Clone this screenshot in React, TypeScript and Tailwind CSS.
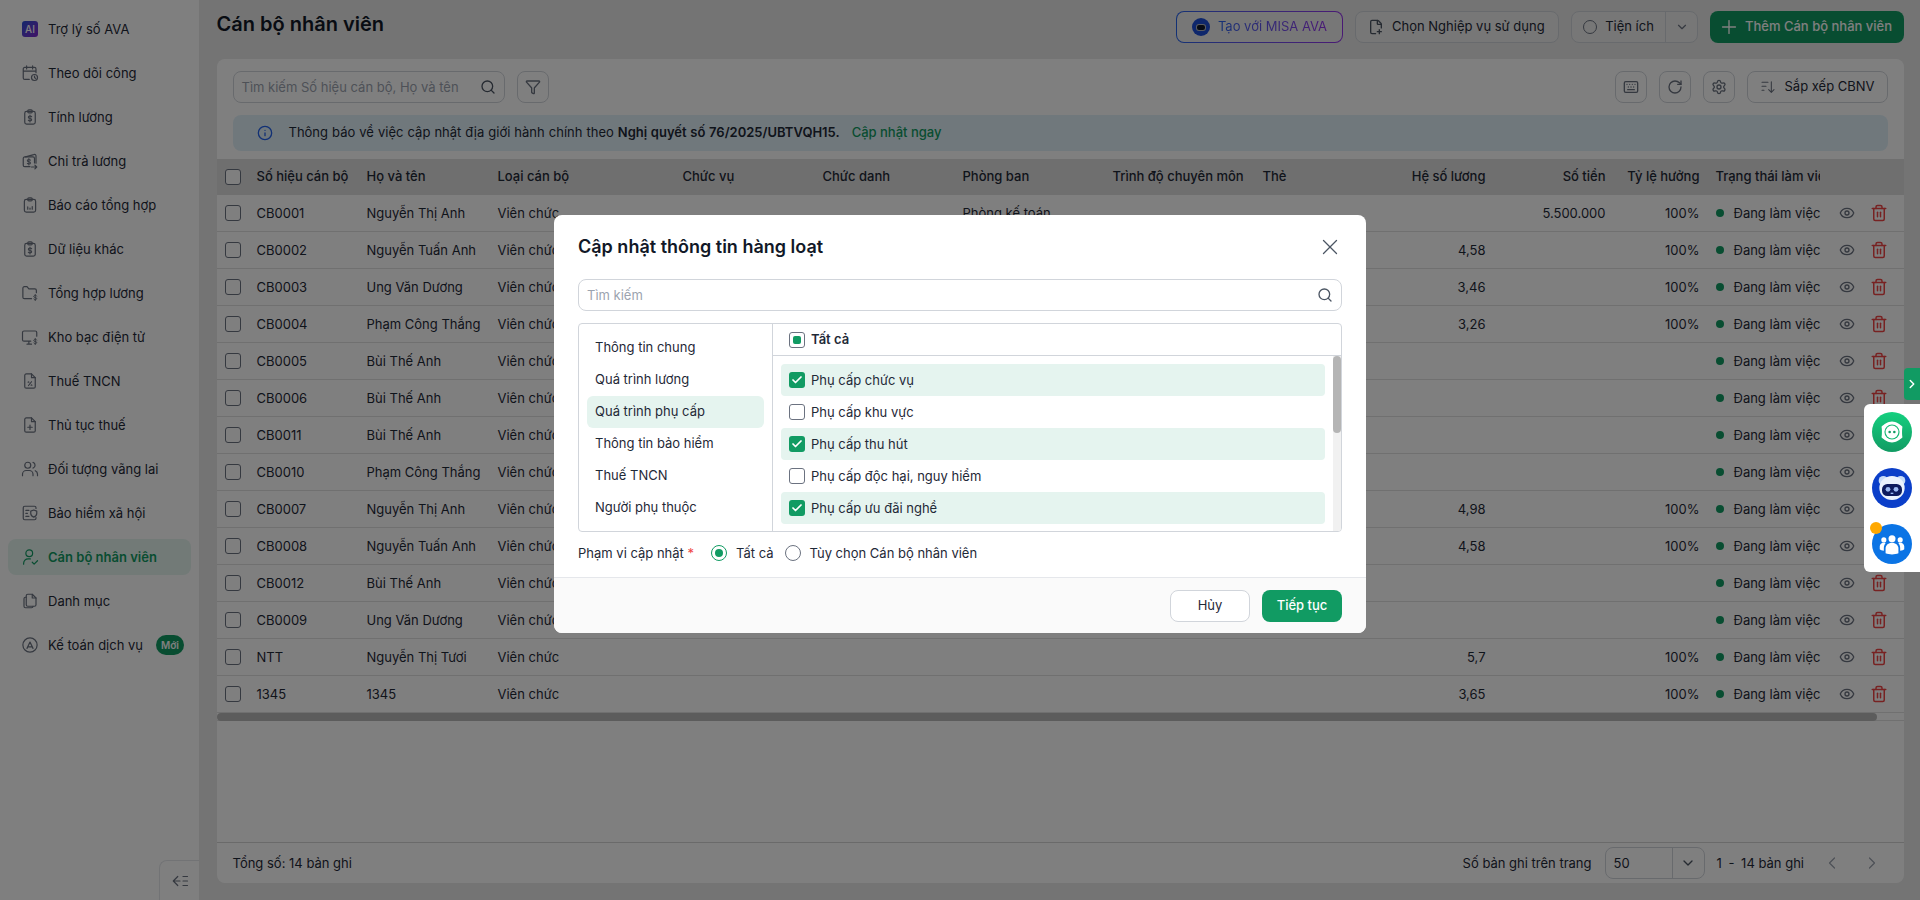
import React from 'react';
import {
  Check, ChevronDown, ChevronLeft, ChevronRight, Eye, FilePlus2, Filter, Info, Keyboard,
  Plus, RotateCw, Search, Settings, Trash2, X,
} from 'lucide-react';

type IconProps = { children: React.ReactNode; className?: string };

// base for hand drawn menu icons, 24 grid
const Ico = ({ children, className = 'w-[18px] h-[18px]' }: IconProps) => (
  <svg viewBox="0 0 24 24" fill="none" stroke="currentColor" strokeWidth={1.6} strokeLinecap="round" strokeLinejoin="round" className={className}>
    {children}
  </svg>
);

const Dollar = ({ x, y, s = 1 }: { x: number; y: number; s?: number }) => (
  <g transform={`translate(${x} ${y}) scale(${s})`}>
    <path d="M2.5-2.5C2-3.4 1-3.6 0-3.6c-1.3 0-2.5.6-2.5 1.8S-1.2 0 0 0s2.5.6 2.5 1.8S1.3 3.6 0 3.6c-1 0-2-.2-2.5-1.1M0-5v10" />
  </g>
);

const ClipDollar = () => (
  <Ico>
    <rect x="5" y="4.5" width="14" height="17" rx="2.5" />
    <rect x="9" y="2.5" width="6" height="4" rx="1.5" />
    <Dollar x={12} y={14} s={0.9} />
  </Ico>
);

const menuItems: { label: string; icon: React.ReactNode; active?: boolean; badge?: string }[] = [
  {
    label: 'Trợ lý số AVA',
    icon: (
      <span className="flex items-center justify-center w-4 h-4 rounded-[3px] bg-gradient-to-br from-[#1d4ed8] to-[#7e22ce] text-white text-[10px] font-medium">AI</span>
    ),
  },
  {
    label: 'Theo dõi công',
    icon: (
      <Ico>
        <path d="M11 20.5H5a2 2 0 0 1-2-2V6.5a2 2 0 0 1 2-2h13a2 2 0 0 1 2 2v5M3 9.5h17M7.5 2.5v4M15.5 2.5v4" />
        <circle cx="18" cy="18" r="4" />
        <path d="M18 16v2l1.2 1" />
      </Ico>
    ),
  },
  { label: 'Tính lương', icon: <ClipDollar /> },
  {
    label: 'Chi trả lương',
    icon: (
      <Ico>
        <path d="M6 6.5 17 3.5a2 2 0 0 1 3 1.5v10" />
        <path d="M12 19.5H5a2 2 0 0 1-2-2v-9a2 2 0 0 1 2-2h11a2 2 0 0 1 2 2v6" />
        <Dollar x={10.5} y={13} s={0.85} />
        <path d="M14 20h7M18.5 17.5 21 20l-2.5 2.5" />
      </Ico>
    ),
  },
  {
    label: 'Báo cáo tổng hợp',
    icon: (
      <Ico>
        <rect x="4.5" y="4.5" width="15" height="17" rx="2.5" />
        <rect x="9" y="2.5" width="6" height="4" rx="1.5" />
        <path d="M9 17.5v-3M12 17.5v-1.5M15 17.5v-3.5" />
      </Ico>
    ),
  },
  { label: 'Dữ liệu khác', icon: <ClipDollar /> },
  {
    label: 'Tổng hợp lương',
    icon: (
      <Ico>
        <path d="M14 19.5H4.5a2 2 0 0 1-2-2v-12a2 2 0 0 1 2-2H8l2.5 3h8a2 2 0 0 1 2 2v3" />
        <Dollar x={19} y={18} s={0.8} />
      </Ico>
    ),
  },
  {
    label: 'Kho bạc điện tử',
    icon: (
      <Ico>
        <path d="M13 17.5H4a2 2 0 0 1-2-2V6a2 2 0 0 1 2-2h15a2 2 0 0 1 2 2v5M8 21.5h6M10.5 17.5v4" />
        <Dollar x={19} y={18} s={0.8} />
      </Ico>
    ),
  },
  {
    label: 'Thuế TNCN',
    icon: (
      <Ico>
        <path d="M14 2.5H7a2 2 0 0 0-2 2v15a2 2 0 0 0 2 2h10a2 2 0 0 0 2-2v-12z" />
        <path d="M14 2.5v5h5M14 13l-4 5" />
        <circle cx="10" cy="13.5" r=".4" />
        <circle cx="14" cy="17.5" r=".4" />
      </Ico>
    ),
  },
  {
    label: 'Thủ tục thuế',
    icon: (
      <Ico>
        <path d="M14 2.5H7a2 2 0 0 0-2 2v15a2 2 0 0 0 2 2h10a2 2 0 0 0 2-2v-12z" />
        <path d="M14 2.5v5h5M12 12v6M9 15h6" />
      </Ico>
    ),
  },
  {
    label: 'Đối tượng vãng lai',
    icon: (
      <Ico>
        <circle cx="9" cy="7" r="4" />
        <path d="M2 21v-2a5 5 0 0 1 5-5h4a5 5 0 0 1 5 5v2M16 3.2a4 4 0 0 1 0 7.6M19 14.3a5 5 0 0 1 3 4.7v2" />
      </Ico>
    ),
  },
  {
    label: 'Bảo hiểm xã hội',
    icon: (
      <Ico>
        <path d="M20 6V5a2 2 0 0 0-2-2H5a2 2 0 0 0-2 2v14a2 2 0 0 0 2 2h13a2 2 0 0 0 2-2v-1M6.5 8.5h4M6.5 12.5h2M6.5 16.5h4" />
        <path d="M17 8l4 1.5v3c0 2.5-1.7 4-4 5-2.3-1-4-2.5-4-5v-3z" />
      </Ico>
    ),
  },
  {
    label: 'Cán bộ nhân viên',
    active: true,
    icon: (
      <Ico>
        <circle cx="11" cy="7" r="4.5" />
        <path d="M3.5 21.5v-1a6 6 0 0 1 6-6h3M15 19l2.5 2.5L22 17" />
      </Ico>
    ),
  },
  {
    label: 'Danh mục',
    icon: (
      <Ico>
        <path d="M9 3h6l5 5v9a2 2 0 0 1-2 2H9a2 2 0 0 1-2-2V5a2 2 0 0 1 2-2z" />
        <path d="M15 3v5h5M7 7H6a2 2 0 0 0-2 2v10a2 2 0 0 0 2 2h8a2 2 0 0 0 2-2" />
      </Ico>
    ),
  },
  {
    label: 'Kế toán dịch vụ',
    badge: 'Mới',
    icon: (
      <Ico>
        <circle cx="12" cy="12" r="9.5" />
        <path d="M8 16.5 12 8l4 8.5M9.5 14.5h5" />
      </Ico>
    ),
  },
];

const columns = 'grid grid-cols-[32px_110px_131px_185px_140px_140px_150px_150px_120px_119px_120px_94px_120px_76px]';

const employees = [
  { id: 'CB0001', name: 'Nguyễn Thị Anh', dept: 'Phòng kế toán', coef: '', money: '5.500.000', rate: '100%' },
  { id: 'CB0002', name: 'Nguyễn Tuấn Anh', dept: '', coef: '4,58', money: '', rate: '100%' },
  { id: 'CB0003', name: 'Ung Văn Dương', dept: '', coef: '3,46', money: '', rate: '100%' },
  { id: 'CB0004', name: 'Phạm Công Thắng', dept: '', coef: '3,26', money: '', rate: '100%' },
  { id: 'CB0005', name: 'Bùi Thế Anh', dept: '', coef: '', money: '', rate: '' },
  { id: 'CB0006', name: 'Bùi Thế Anh', dept: '', coef: '', money: '', rate: '' },
  { id: 'CB0011', name: 'Bùi Thế Anh', dept: '', coef: '', money: '', rate: '' },
  { id: 'CB0010', name: 'Phạm Công Thắng', dept: '', coef: '', money: '', rate: '' },
  { id: 'CB0007', name: 'Nguyễn Thị Anh', dept: '', coef: '4,98', money: '', rate: '100%' },
  { id: 'CB0008', name: 'Nguyễn Tuấn Anh', dept: '', coef: '4,58', money: '', rate: '100%' },
  { id: 'CB0012', name: 'Bùi Thế Anh', dept: '', coef: '', money: '', rate: '' },
  { id: 'CB0009', name: 'Ung Văn Dương', dept: '', coef: '', money: '', rate: '' },
  { id: 'NTT', name: 'Nguyễn Thị Tươi', dept: '', coef: '5,7', money: '', rate: '100%' },
  { id: '1345', name: '1345', dept: '', coef: '3,65', money: '', rate: '100%' },
];

const leftTabs = ['Thông tin chung', 'Quá trình lương', 'Quá trình phụ cấp', 'Thông tin bảo hiểm', 'Thuế TNCN', 'Người phụ thuộc'];

const allowances = [
  { label: 'Phụ cấp chức vụ', on: true },
  { label: 'Phụ cấp khu vực', on: false },
  { label: 'Phụ cấp thu hút', on: true },
  { label: 'Phụ cấp độc hại, nguy hiểm', on: false },
  { label: 'Phụ cấp ưu đãi nghề', on: true },
];

const Box = ({ on = false }: { on?: boolean }) =>
  on ? (
    <span className="flex items-center justify-center w-4 h-4 rounded-[3px] bg-[#119b63] text-white shrink-0">
      <Check size={12} strokeWidth={3.5} />
    </span>
  ) : (
    <span className="block w-4 h-4 rounded-[3px] border border-[#6b7280] bg-white shrink-0" />
  );

const ToolBtn = ({ children }: { children: React.ReactNode }) => (
  <button className="flex items-center justify-center w-8 h-8 rounded-lg border border-[#d1d5db] text-[#6b7280]">{children}</button>
);

export default function App() {
  return (
    <div className="relative flex h-[900px] overflow-hidden bg-[#e8e8e8] text-[13px] text-[#1f2937] font-['Inter',sans-serif]">
      {/* Sidebar */}
      <aside className="relative w-[199px] shrink-0 bg-white pt-[11px]">
        <nav className="flex flex-col gap-2 px-2">
          {menuItems.map(item => (
            <div
              key={item.label}
              className={`flex items-center h-9 rounded-lg pl-[13px] pr-[7px] ${item.active ? 'bg-[#e5f4ef] text-[#119b63] font-semibold' : 'text-[#1f2937]'}`}
            >
              <span className={`flex items-center justify-center w-[18px] h-[18px] shrink-0 ${item.active ? 'text-[#119b63]' : 'text-[#6b7280]'}`}>{item.icon}</span>
              <span className="ml-[9px] pt-[2px] whitespace-nowrap">{item.label}</span>
              {item.badge && (
                <span className="ml-auto flex items-center justify-center w-7 h-5 rounded-full bg-[#119b63] text-white text-[10px] font-semibold">{item.badge}</span>
              )}
            </div>
          ))}
        </nav>
        <button className="absolute right-0 bottom-0 flex items-center justify-center w-10 h-10 rounded-tl-lg border-l border-t border-[#e5e7eb] text-[#6b7280]">
          <Ico className="w-[18px] h-[18px]">
            <path d="M9 6 3 12l6 6M3 12h9M16 6h6M16 12h6M16 18h6" />
          </Ico>
        </button>
      </aside>

      {/* Main */}
      <main className="flex-1 flex flex-col min-w-0 pl-[17.5px] pr-4">
        <header className="flex items-center justify-between h-[59px] pb-[5px] shrink-0">
          <h1 className="pb-[6px] text-xl font-semibold text-[#111827]">Cán bộ nhân viên</h1>
          <div className="flex items-center gap-3">
            <button className="relative flex items-center justify-center w-[167px] h-8 rounded-lg bg-gradient-to-r from-[#2563eb] to-[#9333ea] p-px">
              <span className="flex items-center justify-center gap-2 w-full h-full rounded-[7px] bg-[#eeeeee]">
                <span className="flex items-center justify-center w-[18px] h-[18px] rounded-full bg-[#1d4ed8]">
                  <span className="w-[10px] h-[7px] rounded-[3px] bg-[#0f172a] border border-white/70" />
                </span>
                <span className="bg-gradient-to-r from-[#2563eb] to-[#9333ea] bg-clip-text text-transparent">Tạo với MISA AVA</span>
              </span>
            </button>
            <button className="flex items-center gap-2 w-[204px] h-8 pl-3 rounded-lg border border-[#d1d5db] bg-[#eeeeee]">
              <FilePlus2 size={16} className="text-[#4b5563]" />
              Chọn Nghiệp vụ sử dụng
            </button>
            <div className="flex items-center w-[127px] h-8 rounded-lg border border-[#d1d5db] bg-[#eeeeee]">
              <span className="flex items-center justify-center gap-2 flex-1 h-full">
                <span className="w-[14px] h-[14px] rounded-full border border-[#6b7280]" />
                Tiện ích
              </span>
              <span className="flex items-center justify-center w-8 h-full border-l border-[#d1d5db] text-[#6b7280]">
                <ChevronDown size={14} />
              </span>
            </div>
            <button className="flex items-center gap-[5px] w-[194px] h-8 pl-2 rounded-lg bg-[#119b63] text-white font-medium">
              <Plus size={22} strokeWidth={1.5} />
              Thêm Cán bộ nhân viên
            </button>
          </div>
        </header>

        <section className="flex flex-col h-[824px] rounded-lg bg-white overflow-hidden">
          <div className="flex items-center justify-between h-8 mt-3 mx-4 shrink-0">
            <div className="flex items-center gap-3">
              <div className="flex items-center w-[272px] h-8 rounded-lg border border-[#d1d5db] px-2">
                <span className="flex-1 pt-[2px] text-[#9ca3af] whitespace-nowrap">Tìm kiếm Số hiệu cán bộ, Họ và tên</span>
                <Search size={16} className="text-[#4b5563]" />
              </div>
              <ToolBtn>
                <Filter size={16} />
              </ToolBtn>
            </div>
            <div className="flex items-center gap-3">
              <ToolBtn>
                <Keyboard size={16} />
              </ToolBtn>
              <ToolBtn>
                <RotateCw size={16} />
              </ToolBtn>
              <ToolBtn>
                <Settings size={16} />
              </ToolBtn>
              <button className="flex items-center justify-center gap-2 w-[141px] h-8 rounded-lg border border-[#d1d5db]">
                <Ico className="w-4 h-4 text-[#6b7280]">
                  <path d="M3 5h9M3 11h6M3 17h3M17 4v16M13 16l4 4 4-4" />
                </Ico>
                Sắp xếp CBNV
              </button>
            </div>
          </div>

          <div className="flex items-center h-9 mt-3 mx-4 rounded-lg bg-[#e1f1f9] pl-6 shrink-0">
            <Info size={16} className="text-[#2563eb]" />
            <span className="ml-4 [word-spacing:0.4px]">
              Thông báo về việc cập nhật địa giới hành chính theo <b className="font-semibold">Nghị quyết số 76/2025/UBTVQH15.</b>
            </span>
            <span className="ml-3 text-[#119b63] font-medium">Cập nhật ngay</span>
          </div>

          {/* Table */}
          <div className={`${columns} items-center h-9 mt-2 bg-[#dedede] font-medium shrink-0 whitespace-nowrap`}>
            <span className="pl-2">
              <Box />
            </span>
            <span className="px-2">Số hiệu cán bộ</span>
            <span className="px-2">Họ và tên</span>
            <span className="px-2">Loại cán bộ</span>
            <span className="px-2">Chức vụ</span>
            <span className="px-2">Chức danh</span>
            <span className="px-2">Phòng ban</span>
            <span className="px-2">Trình độ chuyên môn</span>
            <span className="px-2">Thẻ</span>
            <span className="px-2 text-right">Hệ số lương</span>
            <span className="px-2 text-right">Số tiền</span>
            <span className="px-2 text-right">Tỷ lệ hưởng</span>
            <span className="pl-2 overflow-hidden mr-2">Trạng thái làm việc</span>
            <span />
          </div>
          {employees.map(e => (
            <div key={e.id} className={`${columns} items-center h-[37px] border-b border-[#e0e0e0] shrink-0 whitespace-nowrap`}>
              <span className="pl-2">
                <Box />
              </span>
              <span className="px-2 pt-[2px]">{e.id}</span>
              <span className="px-2 pt-[2px]">{e.name}</span>
              <span className="px-2 pt-[2px]">Viên chức</span>
              <span />
              <span />
              <span className="px-2 pt-[2px]">{e.dept}</span>
              <span />
              <span />
              <span className="px-2 pt-[2px] text-right">{e.coef}</span>
              <span className="px-2 pt-[2px] text-right">{e.money}</span>
              <span className="px-2 pt-[2px] text-right">{e.rate}</span>
              <span className="flex items-center pl-2 overflow-hidden">
                <span className="w-2 h-2 rounded-full bg-[#119b63] shrink-0" />
                <span className="ml-[10px] pt-[2px]">Đang làm việc</span>
              </span>
              <span className="flex items-center gap-[15px] pl-[11px]">
                <Eye size={16} className="text-[#6b7280]" />
                <Trash2 size={18} className="text-[#ef4444]" />
              </span>
            </div>
          ))}
          <div className="h-2 border-b border-[#e0e0e0] shrink-0">
            <div className="w-[1660px] h-2 rounded-full bg-[#b9b9b9]" />
          </div>

          <div className="flex-1" />

          <footer className="flex items-center justify-between h-[41px] border-t border-[#d4d4d4] px-4 shrink-0">
            <span className="pt-[2px]">Tổng số: 14 bản ghi</span>
            <div className="flex items-center">
              <span className="pt-[2px]">Số bản ghi trên trang</span>
              <div className="flex items-center w-[100px] h-8 ml-[13px] rounded-lg border border-[#d1d5db]">
                <span className="flex-1 pl-2 pt-[2px]">50</span>
                <span className="flex items-center justify-center w-8 h-full border-l border-[#d1d5db] text-[#4b5563]">
                  <ChevronDown size={16} />
                </span>
              </div>
              <span className="ml-3 pt-[2px]">
                <span className="[word-spacing:3px]">1 - 14</span> bản ghi
              </span>
              <ChevronLeft size={20} strokeWidth={1.5} className="ml-[18px] text-[#9ca3af]" />
              <ChevronRight size={20} strokeWidth={1.5} className="ml-5 mr-[6px] text-[#9ca3af]" />
            </div>
          </footer>
        </section>
      </main>

      {/* Dialog overlay */}
      <div className="absolute inset-0 z-10 flex justify-center items-start pt-[215px] bg-black/50">
        <div className="flex flex-col w-[812px] h-[418px] rounded-lg bg-white overflow-hidden">
          <div className="flex items-center justify-between h-[48px] mt-2 px-6 shrink-0">
            <h2 className="text-lg font-semibold text-[#111827]">Cập nhật thông tin hàng loạt</h2>
            <X size={26} strokeWidth={1.2} className="text-[#4b5563] -mr-px" />
          </div>
          <div className="flex items-center h-8 mx-6 mt-2 rounded-lg border border-[#d1d5db] px-2 shrink-0">
            <span className="flex-1 pt-[2px] text-[#9ca3af]">Tìm kiếm</span>
            <Search size={16} className="text-[#4b5563]" />
          </div>
          <div className="flex h-[209px] mx-6 mt-3 rounded-[4px] border border-[#d1d5db] overflow-hidden shrink-0">
            <div className="w-[194px] shrink-0 border-r border-[#d1d5db] p-2">
              {leftTabs.map(tab => (
                <div key={tab} className={`flex items-center h-8 rounded-md px-2 ${tab === 'Quá trình phụ cấp' ? 'bg-[#e5f4ef]' : ''}`}>
                  {tab}
                </div>
              ))}
            </div>
            <div className="flex-1 flex flex-col min-w-0">
              <div className="flex items-center gap-1.5 h-8 px-4 border-b border-[#d1d5db] shrink-0">
                <span className="flex items-center justify-center w-4 h-4 rounded-[3px] border border-[#6b7280]">
                  <span className="w-2 h-2 rounded-[2px] bg-[#119b63]" />
                </span>
                <span className="font-semibold">Tất cả</span>
              </div>
              <div className="flex flex-1 min-h-0">
                <div className="flex-1 px-2 pt-2 overflow-hidden">
                  {allowances.map(a => (
                    <div key={a.label} className={`flex items-center gap-1.5 h-8 rounded px-2 ${a.on ? 'bg-[#e5f4ef]' : ''}`}>
                      <Box on={a.on} />
                      <span className="pt-[2px]">{a.label}</span>
                    </div>
                  ))}
                </div>
                <div className="w-2 bg-[#f1f1f1] shrink-0">
                  <div className="h-[77px] rounded-full bg-[#b5b5b5]" />
                </div>
              </div>
            </div>
          </div>
          <div className="flex items-center h-8 mx-6 mt-[5px] shrink-0">
            <span className="w-[133px] pt-[2px]">
              Phạm vi cập nhật <span className="text-[#ef4444]">*</span>
            </span>
            <span className="flex items-center justify-center w-4 h-4 rounded-full border border-[#119b63]">
              <span className="w-2 h-2 rounded-full bg-[#119b63]" />
            </span>
            <span className="ml-[9px] pt-[2px]">Tất cả</span>
            <span className="w-4 h-4 ml-[11px] rounded-full border border-[#6b7280]" />
            <span className="ml-[9px] pt-[2px]">Tùy chọn Cán bộ nhân viên</span>
          </div>
          <div className="flex flex-1 items-center justify-end gap-3 mt-2 px-6 bg-[#fafafa] border-t border-[#e5e7eb]">
            <button className="w-20 h-8 rounded-lg border border-[#d1d5db] bg-white">Hủy</button>
            <button className="w-20 h-8 rounded-lg bg-[#119b63] text-white font-medium">Tiếp tục</button>
          </div>
        </div>
      </div>

      {/* Floating widgets, above the dialog backdrop */}
      <button className="absolute z-20 right-0 top-[368px] flex items-center justify-center w-4 h-8 rounded-l bg-[#119b63] text-white">
        <ChevronRight size={14} strokeWidth={2.5} />
      </button>
      <div className="absolute z-20 right-0 top-[404px] flex flex-col items-center gap-4 w-[56px] h-[168px] pt-2 rounded-l-md bg-white">
        <span className="flex items-center justify-center w-10 h-10 rounded-full bg-gradient-to-b from-[#14d07f] to-[#119b63]">
          <svg viewBox="0 0 24 24" className="w-7 h-7">
            <path d="M12 3c3.500 0 7 2.500 9 4.500-.5 1.500-.5 7.500 0 9-2 2-5.500 4.500-9 4.500s-7-2.500-9-4.500c.5-1.500.5-7.500 0-9C5 5.500 8.500 3 12 3z" fill="#fff" />
            <circle cx="12" cy="12" r="6.500" fill="#14b873" />
            <circle cx="12" cy="12" r="5.500" fill="#fff" />
            <circle cx="10" cy="12" r="1.100" fill="#119b63" />
            <circle cx="14" cy="12" r="1.100" fill="#119b63" />
          </svg>
        </span>
        <span className="flex items-center justify-center w-10 h-10 rounded-full bg-[#0b3fc9]">
          <svg viewBox="0 0 24 24" className="w-8 h-8">
            <circle cx="5.500" cy="6.500" r="3.500" fill="#c7dcf8" />
            <circle cx="18.500" cy="6.500" r="3.500" fill="#c7dcf8" />
            <ellipse cx="12" cy="12" rx="9.500" ry="9" fill="#eaf2fd" />
            <rect x="4.500" y="9" width="15" height="9" rx="4" fill="#0d1b5e" />
            <circle cx="9" cy="13" r="1.800" fill="#9bb9f2" />
            <circle cx="15" cy="13" r="1.800" fill="#9bb9f2" />
            <path d="M11 16h2" stroke="#9bb9f2" strokeWidth="1" />
          </svg>
        </span>
        <span className="relative flex items-center justify-center w-10 h-10 rounded-full bg-[#0b74e5]">
          <svg viewBox="0 0 24 24" className="w-7 h-7" fill="#fff">
            <circle cx="12" cy="7.500" r="3" />
            <circle cx="5" cy="8.500" r="2.200" />
            <circle cx="19" cy="8.500" r="2.200" />
            <path d="M6.500 20v-4c0-3 2.500-5 5.500-5s5.500 2 5.500 5v4c-3 1.200-8 1.200-11 0z" />
            <path d="M5 17.800c-1.500-.2-3-.7-3.500-1.300v-2.500c0-1.500 1.500-3 3.500-3 .500 0 1 .1 1.500.3C5.500 12.300 5 13.800 5 15.500zM19 17.800c1.500-.2 3-.7 3.500-1.300v-2.500c0-1.500-1.500-3-3.500-3-.500 0-1 .1-1.500.3 1 1 1.500 2.500 1.500 4.200z" />
          </svg>
          <span className="absolute -left-[2px] -top-[2px] w-3 h-3 rounded-full bg-[#ffa800]" />
        </span>
      </div>
    </div>
  );
}
